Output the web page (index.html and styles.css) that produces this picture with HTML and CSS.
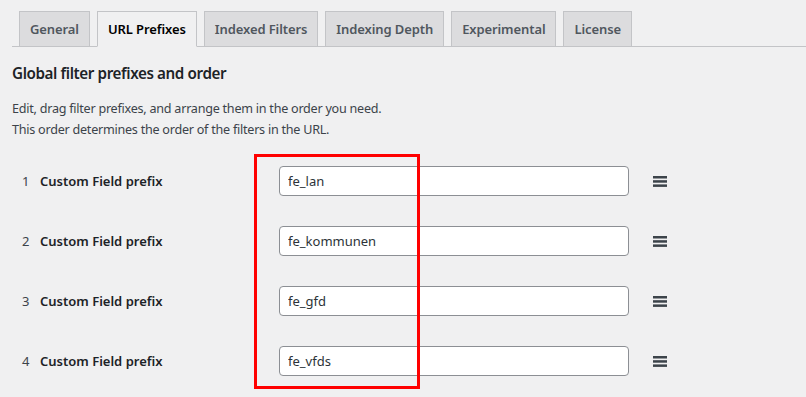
FILE: index.html
```html
<!DOCTYPE html>
<html lang="en">
<head>
    <meta charset="UTF-8">
    <title>URL Prefixes</title>
    <link rel="stylesheet" href="styles.css">
</head>
<body>
    <div class="wrap">
        <nav class="tabs">
            <a class="tab">General</a>
            <a class="tab active">URL Prefixes</a>
            <a class="tab">Indexed Filters</a>
            <a class="tab">Indexing Depth</a>
            <a class="tab">Experimental</a>
            <a class="tab">License</a>
        </nav>

        <h2 class="title">Global filter prefixes and order</h2>
        <p class="desc">Edit, drag filter prefixes, and arrange them in the order you need.<br>This order determines the order of the filters in the URL.</p>

        <div class="rows">
            <div class="row">
                <span class="num">1</span>
                <label class="label">Custom Field prefix</label>
                <input class="field" type="text" value="fe_lan">
                <svg class="handle" width="14" height="11" viewBox="0 0 14 11"><rect y="0" width="14" height="2.5"/><rect y="4.2" width="14" height="2.5"/><rect y="8.4" width="14" height="2.5"/></svg>
            </div>
            <div class="row">
                <span class="num">2</span>
                <label class="label">Custom Field prefix</label>
                <input class="field" type="text" value="fe_kommunen">
                <svg class="handle" width="14" height="11" viewBox="0 0 14 11"><rect y="0" width="14" height="2.5"/><rect y="4.2" width="14" height="2.5"/><rect y="8.4" width="14" height="2.5"/></svg>
            </div>
            <div class="row">
                <span class="num">3</span>
                <label class="label">Custom Field prefix</label>
                <input class="field" type="text" value="fe_gfd">
                <svg class="handle" width="14" height="11" viewBox="0 0 14 11"><rect y="0" width="14" height="2.5"/><rect y="4.2" width="14" height="2.5"/><rect y="8.4" width="14" height="2.5"/></svg>
            </div>
            <div class="row">
                <span class="num">4</span>
                <label class="label">Custom Field prefix</label>
                <input class="field" type="text" value="fe_vfds">
                <svg class="handle" width="14" height="11" viewBox="0 0 14 11"><rect y="0" width="14" height="2.5"/><rect y="4.2" width="14" height="2.5"/><rect y="8.4" width="14" height="2.5"/></svg>
            </div>
        </div>

        <div class="mark"></div>
    </div>
</body>
</html>
```

FILE: styles.css
```css
body {
    margin: 0;
    background-color: #f0f0f1;
    font-family: "Noto Sans", "Open Sans", sans-serif;
    color: #3c434a;
    font-size: 14px;
    overflow: hidden;
}
.wrap {
    position: relative;
    margin-left: 12px;
    padding-top: 11px;
}
.tabs {
    display: flex;
    border-bottom: 1px solid #c3c4c7;
}
.tab {
    margin-left: 7px;
    margin-bottom: -1px;
    padding: 5px 10px;
    font-size: 13px;
    line-height: 24px;
    font-weight: 600;
    letter-spacing: -0.1px;
    color: #50575e;
    background: #dcdcde;
    border: 1px solid #c3c4c7;
    white-space: nowrap;
}
.tab.active {
    background: #f0f0f1;
    color: #000;
    border-bottom-color: #f0f0f1;
}
.title {
    margin: 15px 0 0;
    font-size: 15.2px;
    line-height: 23px;
    font-weight: 600;
    letter-spacing: -0.4px;
    color: #1d2327;
}
.desc {
    margin: 13px 0 0;
    font-size: 12.6px;
    line-height: 21px;
    letter-spacing: -0.25px;
}
.rows {
    margin-top: 11px;
}
.row {
    display: flex;
    align-items: center;
    height: 60px;
    padding-left: 10px;
}
.num {
    width: 18px;
    font-size: 13px;
}
.label {
    width: 239px;
    font-weight: 600;
    font-size: 13px;
    color: #1d2327;
}
.field {
    box-sizing: border-box;
    width: 350px;
    height: 30px;
    margin: 0;
    padding: 0 8px;
    border: 1px solid #8c8f94;
    border-radius: 4px;
    background: #fff;
    font-family: inherit;
    font-size: 13px;
    color: #2c3338;
}
.handle {
    margin-left: 24px;
    fill: #3c434a;
}
.mark {
    position: absolute;
    left: 242px;
    top: 154px;
    width: 160px;
    height: 229px;
    border: 3px solid #ff0000;
}
```
